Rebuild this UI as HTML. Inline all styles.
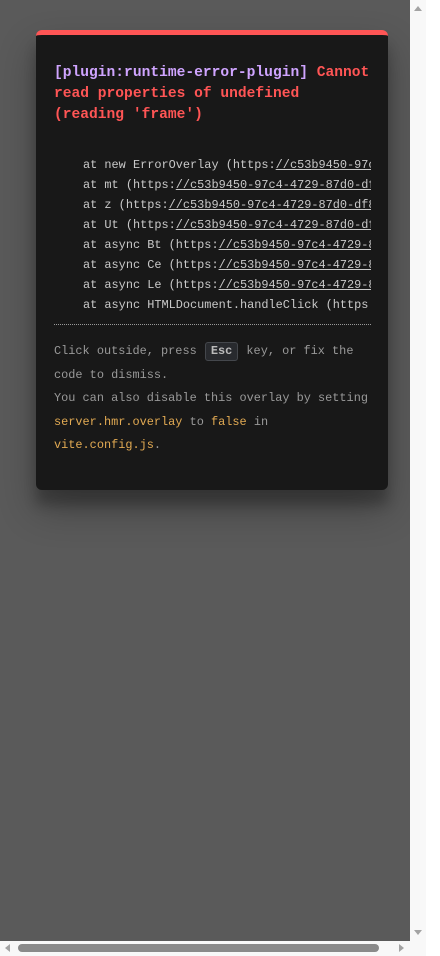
<!DOCTYPE html>
<html><head><meta charset="utf-8"><style>
html,body{margin:0;padding:0;width:440px;height:956px;overflow:hidden;background:#fff;}
.view{position:absolute;left:0;top:0;width:410px;height:941px;background:#5a5a5a;overflow:hidden;}
.card{position:absolute;left:36px;top:30px;width:352px;height:460px;background:#181818;border-top:5px solid #ff5555;border-radius:6px;box-sizing:border-box;box-shadow:0 19px 38px rgba(0,0,0,.3),0 15px 12px rgba(0,0,0,.22);font-family:"Liberation Mono",monospace;overflow:hidden;}
.inner{position:absolute;left:18px;top:0;width:317px;height:450px;overflow:hidden;}
.msg{position:absolute;top:28px;left:0;width:330px;font-size:14.6px;line-height:21px;font-weight:bold;color:#ff5555;white-space:pre;}
.msg .p{color:#cfa4ff;}
.stack{position:absolute;top:120px;left:29px;font-size:11.9px;line-height:20px;color:#c9c9c9;white-space:pre;}
.stack u{text-decoration:underline;}
.hr{position:absolute;top:289px;left:0;width:317px;border-top:1px dotted #999;}
.tip{position:absolute;top:305px;left:0;width:330px;font-size:11.9px;line-height:23.6px;color:#999;white-space:pre;}
.tip code{color:#e2aa53;font-family:inherit;}
.kbd{display:inline-block;background:#282a2e;border:1px solid #44474c;border-radius:3px;color:#bbb;font-weight:600;line-height:17px;padding:0 5px;margin:0 1px;}
.vs{position:absolute;left:410px;top:0;width:16px;height:941px;background:#f8f8f8;}
.hs{position:absolute;left:0;top:941px;width:426px;height:15px;background:#f8f8f8;}
.thumb{position:absolute;left:18px;top:3px;width:361px;height:8px;border-radius:4px;background:#8a8a8a;}
.tri{position:absolute;width:0;height:0;}
</style></head><body>
<div class="view">
<div class="card"><div class="inner">
<div class="msg"><span class="p">[plugin:runtime-error-plugin]</span> Cannot
read properties of undefined
(reading 'frame')</div>
<div class="stack">at new ErrorOverlay (https:<u>//c53b9450-97c4-4729</u>
at mt (https:<u>//c53b9450-97c4-4729-87d0-df8</u>
at z (https:<u>//c53b9450-97c4-4729-87d0-df8</u>
at Ut (https:<u>//c53b9450-97c4-4729-87d0-df8</u>
at async Bt (https:<u>//c53b9450-97c4-4729-8</u>
at async Ce (https:<u>//c53b9450-97c4-4729-8</u>
at async Le (https:<u>//c53b9450-97c4-4729-8</u>
at async HTMLDocument.handleClick (https:</div>
<div class="hr"></div>
<div class="tip">Click outside, press <span class="kbd">Esc</span> key, or fix the
code to dismiss.
You can also disable this overlay by setting
<code>server.hmr.overlay</code> to <code>false</code> in
<code>vite.config.js</code>.</div>
</div></div>
</div>
<div class="vs">
<div class="tri" style="left:4px;top:6px;border-left:4px solid transparent;border-right:4px solid transparent;border-bottom:5px solid #a3a3a3;"></div>
<div class="tri" style="left:4px;top:930px;border-left:4px solid transparent;border-right:4px solid transparent;border-top:5px solid #a3a3a3;"></div>
</div>
<div class="hs">
<div class="tri" style="left:5px;top:3px;border-top:4px solid transparent;border-bottom:4px solid transparent;border-right:5px solid #a3a3a3;"></div>
<div class="thumb"></div>
<div class="tri" style="left:399px;top:3px;border-top:4px solid transparent;border-bottom:4px solid transparent;border-left:5px solid #a3a3a3;"></div>
</div>
</body></html>
